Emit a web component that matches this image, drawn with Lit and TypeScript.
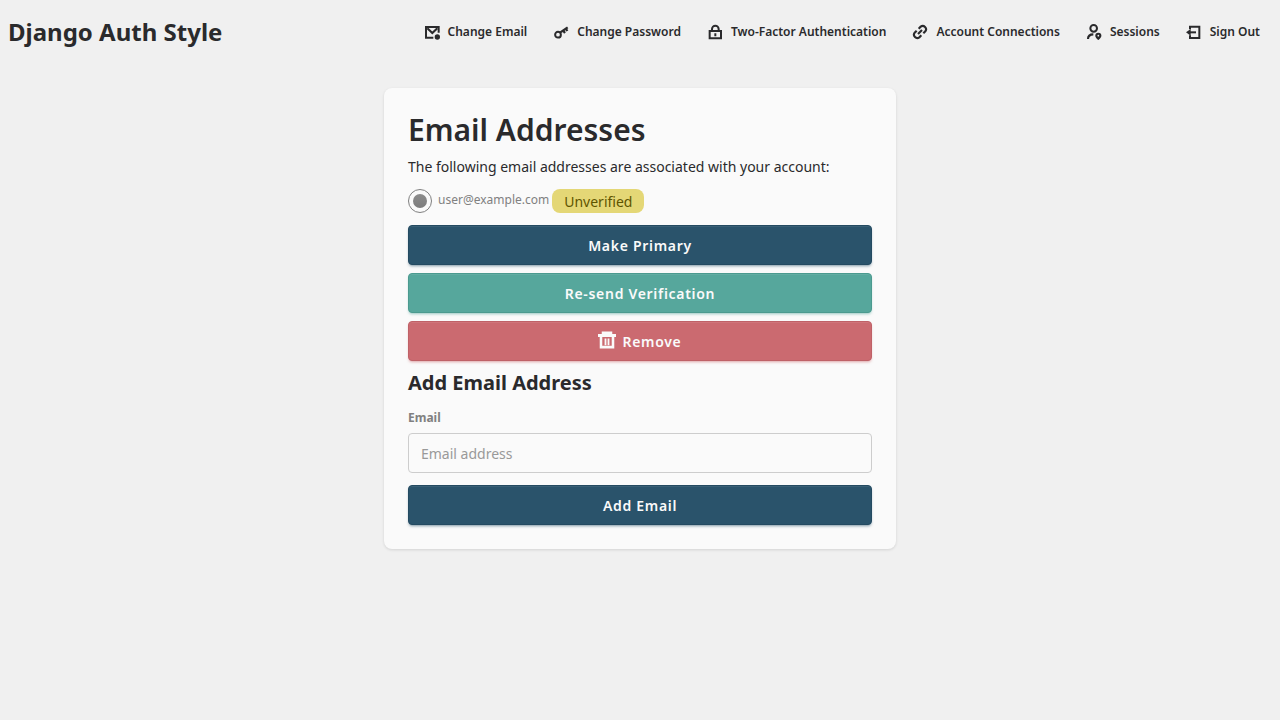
import { LitElement, html, css, svg } from "lit";
import { customElement } from "lit/decorators.js";

const icons = {
  mail: svg`<path d="M22 13V4.500H3V20.500H14" stroke-width="3"/><path d="M5 6.500l7.500 7 7.500-7" stroke-width="3.200"/><circle cx="20" cy="19.500" r="4" fill="currentColor" stroke="none"/>`,
  key: svg`<circle cx="7.500" cy="16" r="4.300" stroke-width="3"/><path d="M10.500 13L22 5M15 9.500l3 4M19 6.500l2.500 4" stroke-width="3.400"/>`,
  lock: svg`<path d="M4 10.500h17v11H4z" stroke-width="3"/><path d="M7.500 10V7.500a5 5 0 0 1 10 0V10M12.500 14v4.500" stroke-width="3"/>`,
  link: svg`<path d="M10 7l3-3a5 5 0 0 1 7 7l-3 3M14 17l-3 3a5 5 0 0 1-7-7l3-3M9 15l6-6" stroke-width="3.200"/>`,
  session: svg`<circle cx="11.500" cy="6.500" r="5" stroke-width="3"/><path d="M3 22.500c0-5 3-7 8-7" stroke-width="3.200"/><path d="M18.500 13a4.600 4.600 0 0 1 4.600 4.600c0 3-4.600 6.400-4.600 6.400s-4.600-3.400-4.600-6.400a4.600 4.600 0 0 1 4.600-4.600zm0 3.200a1.300 1.300 0 1 0 0 2.600 1.300 1.300 0 0 0 0-2.600z" fill="currentColor" stroke="none" fill-rule="evenodd"/>`,
  exit: svg`<path d="M6 8V4h14v17H6v-4" stroke-width="3"/><path d="M5 12.500h10" stroke-width="3"/><path d="M7 7.500v10l-7-5z" fill="currentColor" stroke="none"/>`,
  trash: svg`<path d="M0 6h24M7 5V2.500h10V5" stroke-width="4"/><path d="M4 6v15.500h16V6" stroke-width="3.400"/><path d="M10 10v9M14 10v9" stroke-width="2.400"/>`,
};

const icon = (shape: unknown) =>
  html`<svg class="icon" viewBox="0 0 24 24" fill="none" stroke="currentColor" aria-hidden="true">${shape}</svg>`;

@customElement("app-root")
export class AppRoot extends LitElement {
  static styles = css`
    :host {
      display: block;
      min-height: 100vh;
      background: #f0f0f0;
      color: #2a2a2c;
      font: 14px/20px "Noto Sans", sans-serif;
    }
    * { box-sizing: border-box; }
    h1, h2, p { margin: 0; }
    header {
      display: flex;
      align-items: center;
      justify-content: space-between;
      min-height: 64px;
      padding: 8px;
    }
    .brand {
      color: inherit;
      text-decoration: none;
      font-size: 24px;
      line-height: 32px;
      font-weight: 700;
    }
    nav { display: flex; gap: 2px; }
    .link {
      display: flex;
      align-items: center;
      gap: 8px;
      padding: 8px 12px;
      color: inherit;
      text-decoration: none;
      font-size: 12px;
      line-height: 16px;
      font-weight: 600;
    }
    .icon { display: block; width: 16px; height: 16px; flex: none; }
    .card {
      width: 100%;
      max-width: 512px;
      margin: 24px auto;
      padding: 24px;
      border-radius: 8px;
      background: #fafafa;
      box-shadow: 0 1px 3px rgba(0, 0, 0, 0.12);
    }
    .title { font-size: 30px; line-height: 36px; font-weight: 600; }
    .intro { margin-top: 9px; }
    form { display: flex; flex-direction: column; }
    .address { display: flex; align-items: center; margin: 12px 0; height: 24px; }
    .radio {
      appearance: none;
      width: 24px;
      height: 24px;
      margin: 0 6px 0 0;
      border: 1px solid #808080;
      border-radius: 50%;
      background: linear-gradient(#8c8c8c, #7c7c7c) content-box;
      padding: 4px;
    }
    .address label { color: #808080; font-size: 12px; line-height: 16px; padding-bottom: 2px; }
    .badge {
      margin-left: 3px;
      padding: 3px 12px 1px;
      border-radius: 8px;
      background: #e4d776;
      color: #5f5400;
    }
    .actions { display: flex; flex-direction: column; gap: 8px; }
    .btn {
      display: flex;
      align-items: center;
      justify-content: center;
      gap: 6px;
      height: 40px;
      padding: 2px 16px 0;
      border: 1px solid #244a61;
      border-radius: 4px;
      background: #2a536b;
      color: #fafafa;
      font: 600 14px/20px "Noto Sans", sans-serif;
      letter-spacing: 0.05em;
      box-shadow: 0 2px 3px -1px rgba(42, 83, 107, 0.6), inset 0 1px 0 rgba(255, 255, 255, 0.08);
    }
    .teal {
      background: #56a79c;
      border-color: #4b9a8f;
      box-shadow: 0 2px 3px -1px rgba(86, 167, 156, 0.6), inset 0 1px 0 rgba(255, 255, 255, 0.08);
    }
    .red {
      background: #cb6a70;
      border-color: #bf6167;
      box-shadow: 0 2px 3px -1px rgba(203, 106, 112, 0.6), inset 0 1px 0 rgba(255, 255, 255, 0.08);
    }
    .red .icon { width: 18px; height: 18px; margin-bottom: 4px; }
    .subtitle { margin-top: 8px; font-size: 20px; line-height: 28px; font-weight: 700; }
    .label { margin: 13px 0 7px; color: #808080; font-size: 12px; line-height: 16px; font-weight: 700; }
    .input {
      width: 100%;
      height: 40px;
      margin-bottom: 12px;
      padding: 0 12px;
      border: 1px solid #cdcdcd;
      border-radius: 4px;
      background: transparent;
      color: inherit;
      font: 14px/20px "Noto Sans", sans-serif;
    }
    .input::placeholder { color: #999; opacity: 1; }
  `;

  render() {
    return html`
      <header>
        <a class="brand" href="#">Django Auth Style</a>
        <nav>
          <a class="link" href="#email">${icon(icons.mail)}Change Email</a>
          <a class="link" href="#password">${icon(icons.key)}Change Password</a>
          <a class="link" href="#2fa">${icon(icons.lock)}Two-Factor Authentication</a>
          <a class="link" href="#connections">${icon(icons.link)}Account Connections</a>
          <a class="link" href="#sessions">${icon(icons.session)}Sessions</a>
          <a class="link" href="#logout">${icon(icons.exit)}Sign Out</a>
        </nav>
      </header>
      <main class="card">
        <h1 class="title">Email Addresses</h1>
        <p class="intro">The following email addresses are associated with your account:</p>
        <form @submit=${(e: Event) => e.preventDefault()}>
          <div class="address">
            <input class="radio" type="radio" id="address" name="email" checked />
            <label for="address">user@example.com</label>
            <span class="badge">Unverified</span>
          </div>
          <div class="actions">
            <button class="btn">Make Primary</button>
            <button class="btn teal">Re-send Verification</button>
            <button class="btn red">${icon(icons.trash)}Remove</button>
          </div>
        </form>
        <h2 class="subtitle">Add Email Address</h2>
        <form @submit=${(e: Event) => e.preventDefault()}>
          <label class="label" for="new-email">Email</label>
          <input class="input" type="email" id="new-email" placeholder="Email address" />
          <button class="btn">Add Email</button>
        </form>
      </main>
    `;
  }
}
